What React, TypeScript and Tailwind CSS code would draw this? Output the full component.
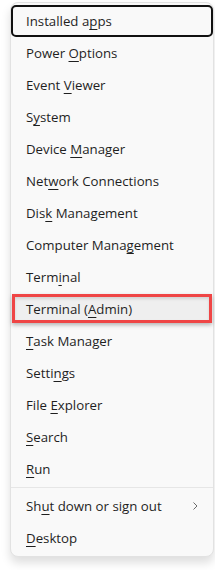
import React from "react";

type Item = { pre: string; key: string; post: string; sub?: boolean };

const items: Item[] = [
  { pre: "Installed a", key: "p", post: "ps" },
  { pre: "Power ", key: "O", post: "ptions" },
  { pre: "Event ", key: "V", post: "iewer" },
  { pre: "S", key: "y", post: "stem" },
  { pre: "Device ", key: "M", post: "anager" },
  { pre: "Net", key: "w", post: "ork Connections" },
  { pre: "Dis", key: "k", post: " Management" },
  { pre: "Computer Mana", key: "g", post: "ement" },
  { pre: "Term", key: "i", post: "nal" },
  { pre: "Terminal (", key: "A", post: "dmin)" },
  { pre: "", key: "T", post: "ask Manager" },
  { pre: "Setti", key: "n", post: "gs" },
  { pre: "File ", key: "E", post: "xplorer" },
  { pre: "", key: "S", post: "earch" },
  { pre: "", key: "R", post: "un" },
];

const items2: Item[] = [
  { pre: "Sh", key: "u", post: "t down or sign out", sub: true },
  { pre: "", key: "D", post: "esktop" },
];

function Label({ it }: { it: Item }) {
  return (
    <span className="whitespace-pre">
      {it.pre}
      <span className="underline decoration-[1px] underline-offset-[3px]">{it.key}</span>
      {it.post}
    </span>
  );
}

function Row({ it, idx }: { it: Item; idx: number }) {
  const focused = idx === 0;
  const admin = idx === 9;
  return (
    <div className="relative h-[32px] flex items-center pl-[15px] pr-[14px]">
      {focused && (
        <div className="absolute inset-0 rounded-[5px] border-2 border-[#111111]" />
      )}
      {admin && (
        <div className="absolute left-[1px] right-[1px] top-[1px] h-[29px] border-[3px] border-[#ef4545] bg-[#efefef] shadow-[0_2px_4px_rgba(0,0,0,0.28),inset_0_2px_3px_rgba(0,0,0,0.12)]" />
      )}
      <span className="relative flex-1 translate-y-[1px]">
        <Label it={it} />
      </span>
      {it.sub && (
        <svg className="relative" width="8" height="10" viewBox="0 0 8 10">
          <path d="M2.5 1.5 L6 5 L2.5 8.5" fill="none" stroke="#6b6b6b" strokeWidth="1" />
        </svg>
      )}
    </div>
  );
}

export default function App() {
  return (
    <div
      className="w-[215px] h-[570px] bg-white pt-[2px] pl-[10px] text-[#1f1f1f] text-[13.25px]"
      style={{ fontFamily: '"Open Sans", "Noto Sans", sans-serif' }}
    >
      <div className="w-[204px] rounded-[8px] bg-[#f9f9f9] border border-[#e2e2e2] shadow-[0_6px_10px_rgba(0,0,0,0.13)] py-[2px]">
        {items.map((it, i) => (
          <Row key={i} it={it} idx={i} />
        ))}
        <div className="my-[2px] h-px bg-[#e6e6e6]" />
        {items2.map((it, i) => (
          <Row key={"b" + i} it={it} idx={100 + i} />
        ))}
      </div>
    </div>
  );
}
